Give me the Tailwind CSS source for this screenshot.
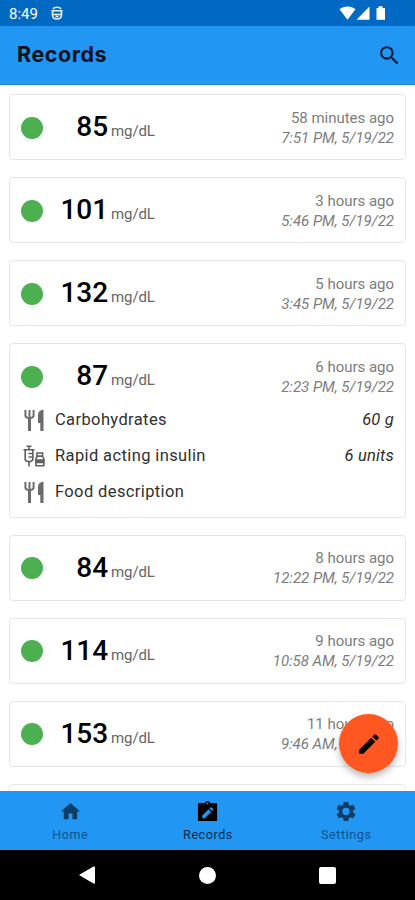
<!DOCTYPE html>
<html lang="en">
<head>
<meta charset="utf-8">
<title>Records</title>
<script src="https://cdn.jsdelivr.net/npm/@tailwindcss/browser@4"></script>
</head>
<body class="w-[415px] h-[900px] overflow-hidden bg-white font-['Roboto',sans-serif]">
<svg class="hidden">
  <symbol id="cutlery" viewBox="0 0 22 22">
    <path d="M2.400 1v5.200c0 2 1.200 2.800 4.100 2.800s4.100-.8 4.100-2.800V1M6.500 1v21" fill="none" stroke="currentColor" stroke-width="2"/>
    <path d="M6.500 9v13" fill="none" stroke="currentColor" stroke-width="3"/>
    <path d="M20.500.8v21.200h-3.200v-8H15V6.500C15 3 17 .8 20.500.8z" fill="currentColor"/>
  </symbol>
</svg>
<div class="relative flex flex-col h-[900px]">
  <header class="shrink-0">
    <div class="h-[26px] bg-[#0169c1] flex items-center pl-[9px] pr-[28px] text-white">
      <span class="text-[15px] leading-[26px] pt-[1px] w-[42px]">8:49</span>
      <svg class="w-[12px] h-[14px]" viewBox="0 0 12 14" fill="none" stroke="#e6f1fb" stroke-width="1.600"><path d="M2 3C3.400.6 8.600.6 10 3M.5 4.800h11M1.500 5v4c0 5.300 9 5.300 9 0V5M2 8.500h8"/><path d="M4.500 10.500h3"/></svg>
      <svg class="ml-auto w-[48px] h-[14px]" viewBox="0 0 48 14" fill="#fff"><path d="M.5 3.200C5-.4 12-.4 16.500 3.200L8.500 13.700z"/><path d="M17.500 13.700 30.500 .5v13.200z"/><path d="M37.500 2h2V.3h4V2h2.500v11.700h-8.500z"/></svg>
    </div>
    <div class="h-[59px] bg-[#2196f3] border-b border-[#1c86dc] flex items-center justify-between pl-[17px] pr-[13px]">
      <h1 class="font-['Inter',sans-serif] font-bold text-[21.500px] leading-[28px] tracking-[0.550px] text-[#04121f] pb-[2px]">Records</h1>
      <svg class="w-[25px] h-[25px]" viewBox="0 0 24 24" fill="#061a2b"><path d="M15.500 14h-.79l-.28-.27A6.471 6.471 0 0 0 16 9.500 6.500 6.500 0 1 0 9.500 16c1.610 0 3.090-.59 4.230-1.570l.27.28v.79l5 4.990L20.490 19l-4.990-5zm-6 0C7.010 14 5 11.990 5 9.500S7.010 5 9.500 5 14 7.010 14 9.500 11.990 14 9.500 14z"/></svg>
    </div>
  </header>

  <main id="list" class="flex-1 min-h-0 overflow-hidden flex flex-col gap-[17px] px-[9px] pt-[9px]"></main>

  <button class="absolute left-[339px] top-[714px] w-[59px] h-[59px] rounded-full bg-[#ff5722] shadow-[0_4px_7px_rgba(0,0,0,0.28)] flex items-center justify-center" aria-label="Edit">
    <svg class="w-[26px] h-[26px]" viewBox="0 0 24 24" fill="#000"><path d="M3 17.250V21h3.750L17.810 9.940l-3.750-3.750L3 17.250zM20.710 7.040a.996.996 0 0 0 0-1.410l-2.340-2.340a.996.996 0 0 0-1.410 0l-1.830 1.830 3.750 3.750 1.830-1.830z"/></svg>
  </button>

  <nav class="shrink-0 h-[59px] bg-[#2196f3] grid grid-cols-3 text-[12.500px] leading-[16px] tracking-[0.600px]">
    <div class="flex flex-col items-center pt-[9px] gap-[4px] text-[#115388] pl-[2px]">
      <svg class="w-[23px] h-[23px]" viewBox="0 0 24 24" fill="#0e3e66"><path d="M10 20v-6h4v6h5v-8h3L12 3 2 12h3v8z"/></svg>
      <span>Home</span>
    </div>
    <div class="flex flex-col items-center pt-[9px] gap-[4px] text-[#082a47] pl-[1px]">
      <svg class="w-[23px] h-[23px]" viewBox="0 0 24 24"><path fill="#000" d="M3 3h6.200a3 3 0 0 1 5.600 0H21a1 1 0 0 1 1 1v17a1 1 0 0 1-1 1H3a1 1 0 0 1-1-1V4a1 1 0 0 1 1-1z"/><path fill="#2196f3" d="M6.500 16.300V19h2.700l6.600-6.600-2.700-2.700zM16.600 11.600l1.200-1.200q.5-.6 0-1.200l-1.500-1.500q-.6-.5-1.200 0l-1.200 1.200z"/><circle cx="12" cy="3.600" r="1" fill="#2196f3"/></svg>
      <span>Records</span>
    </div>
    <div class="flex flex-col items-center pt-[9px] gap-[4px] text-[#115388] pl-[1px]">
      <svg class="w-[24px] h-[23px]" viewBox="0 0 24 24" fill="#0e3e66"><path d="M19.430 12.980c.04-.32.07-.64.07-.98s-.03-.66-.07-.98l2.110-1.650c.19-.15.24-.42.12-.64l-2-3.460c-.12-.22-.39-.3-.61-.22l-2.490 1c-.52-.4-1.080-.73-1.690-.98l-.38-2.650A.488.488 0 0 0 14 2h-4c-.25 0-.46.18-.49.42l-.38 2.650c-.61.25-1.170.59-1.690.98l-2.490-1c-.23-.09-.49 0-.61.22l-2 3.460c-.13.22-.07.49.12.64l2.110 1.650c-.04.32-.07.65-.07.98s.03.66.07.98l-2.110 1.650c-.19.15-.24.42-.12.64l2 3.460c.12.22.39.3.61.22l2.490-1c.52.4 1.080.73 1.690.98l.38 2.650c.03.24.24.42.49.42h4c.25 0 .46-.18.49-.42l.38-2.650c.61-.25 1.170-.59 1.690-.98l2.490 1c.23.09.49 0 .61-.22l2-3.460c.12-.22.07-.49-.12-.64l-2.110-1.650zM12 15.800a3.800 3.800 0 1 1 0-7.600 3.800 3.800 0 0 1 0 7.600z"/></svg>
      <span>Settings</span>
    </div>
  </nav>

  <div class="shrink-0 h-[50px] bg-black grid grid-cols-3 place-items-center">
    <svg class="w-[18px] h-[20px] ml-[36px]" viewBox="0 0 18 20" fill="#fff"><path d="M1 10 15.500 1.500Q17 1 17 2.500v15q0 1.500-1.500 1z"/></svg>
    <div class="w-[17px] h-[17px] rounded-full bg-white"></div>
    <div class="w-[17px] h-[17px] rounded-[2px] bg-white mr-[37px]"></div>
  </div>
</div>

<script>
const records = [
  ['85', '58 minutes ago', '7:51 PM, 5/19/22'],
  ['101', '3 hours ago', '5:46 PM, 5/19/22'],
  ['132', '5 hours ago', '3:45 PM, 5/19/22'],
  ['87', '6 hours ago', '2:23 PM, 5/19/22', [['food', 'Carbohydrates', '60 g'], ['insulin', 'Rapid acting insulin', '6 units'], ['food', 'Food description', '']]],
  ['84', '8 hours ago', '12:22 PM, 5/19/22'],
  ['114', '9 hours ago', '10:58 AM, 5/19/22'],
  ['153', '11 hours ago', '9:46 AM, 5/19/22']
];
const icons = {
  food: '<svg class="w-[22px] h-[22px] text-[#6c6c6c]"><use href="#cutlery"/></svg>',
  insulin: '<svg class="w-[22px] h-[22px]" viewBox="0 0 22 22" fill="none" stroke="#606060" stroke-width="1.600"><path d="M3.500 1.200h5M6 1v4M.5 4.700h11M2.200 5v10l2 1.500h3.600l2-1.500V5M6 16v5.500M5.500 8.500h3.500M5.500 12h3.500"/><path d="M14 8h5.600v3H14zM13 20.800v-7.500l1.500-2h4.800l1.500 2v7.500z"/><path fill="#606060" d="M13.200 15h7.600v2.500h-7.600z"/></svg>'
};
document.getElementById('list').innerHTML = records.map(([value, ago, at, items]) => `
  <article class="shrink-0 border border-[#e6e6e6] rounded-[4px] bg-white pl-[11px] pr-[11px] ${items ? 'h-[174.500px]' : 'h-[66px]'}">
    <div class="h-[64px] flex items-center">
      <span class="w-[22px] h-[22px] rounded-full bg-[#4caf50] relative top-[0.500px]"></span>
      <div class="flex items-baseline">
        <span class="w-[65px] text-right text-[28px] leading-[34px] font-medium tracking-[-0.100px] text-black">${value}</span>
        <span class="ml-[3px] text-[15px] tracking-[-0.100px] text-[#666]">mg/dL</span>
      </div>
      <div class="ml-auto text-right text-[15px] leading-[20px] text-[#7d7d7d] pt-[1px] tracking-[-0.020px]">
        <div>${ago}</div><div class="italic">${at}</div>
      </div>
    </div>
    ${(items || []).map(([icon, name, amount]) => `
    <div class="h-[36.200px] flex items-center relative top-[-6px] text-[16.500px] text-[#303030]">
      <span class="w-[34px] pl-[2px]">${icons[icon]}</span>
      <span class="tracking-[0.380px]">${name}</span>
      <span class="ml-auto italic tracking-[0.200px]">${amount}</span>
    </div>`).join('')}
  </article>`).join('') + '<article class="shrink-0 h-[66px] border border-[#e6e6e6] rounded-[4px]"></article>';
</script>
</body>
</html>
